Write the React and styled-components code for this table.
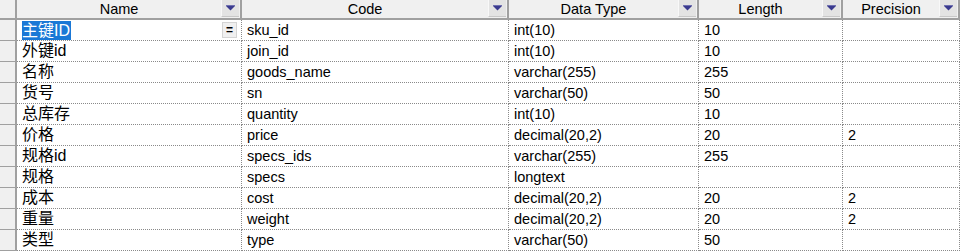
import React from 'react';
import styled, { createGlobalStyle } from 'styled-components';

const GlobalStyle = createGlobalStyle`
  body {
    margin: 0;
    background: #ffffff;
    font-family: "Liberation Sans", "Noto Sans CJK SC", sans-serif;
  }
`;

const COLUMNS = '17px 225px 267px 190px 144px 117px';

const Grid = styled.div`
  display: grid;
  grid-template-columns: ${COLUMNS};
  width: 961px;
  color: #000;
  font-size: 14.5px;
`;

const Corner = styled.div`
  height: 18px;
  background: #f0f0f0;
  border-right: 2px solid #a0a0a0;
  border-bottom: 2px solid #a0a0a0;
  box-sizing: content-box;
`;

const HeaderCell = styled.div`
  display: flex;
  align-items: flex-start;
  height: 18px;
  background: #f0f0f0;
  border-bottom: 2px solid #a0a0a0;
  border-right: 2px solid #a0a0a0;
`;

const HeaderLabel = styled.span`
  flex: 1;
  text-align: center;
  line-height: 18px;
  white-space: nowrap;
`;

const DropButton = styled.span`
  display: flex;
  align-items: center;
  justify-content: center;
  width: 18px;
  height: 17px;
  background: #e3e3e3;
  border-left: 1px solid #f8f8f8;
  border-bottom: 1px solid #c8c8c8;
  box-sizing: border-box;
  margin-right: 1px;
`;

const RowHead = styled.div`
  height: 20px;
  background: #f0f0f0;
  border-right: 2px solid #a0a0a0;
  border-bottom: 1px solid #a0a0a0;
`;

const Cell = styled.div`
  display: flex;
  align-items: center;
  justify-content: space-between;
  height: 20px;
  padding-left: 5px;
  line-height: 20px;
  font-size: ${p => (p.$name ? '16px' : '14.5px')};
  border-right: 1px dotted #8a8a8a;
  border-bottom: 1px dotted #8a8a8a;
  white-space: nowrap;
  overflow: hidden;
`;

const Selected = styled.span`
  background: #1a78d6;
  color: #ffffff;
  line-height: 19px;
  padding-right: 1px;
`;

const EditButton = styled.span`
  display: flex;
  align-items: center;
  justify-content: center;
  width: 15px;
  height: 16px;
  margin-right: 4px;
  background: #f0f0f0;
  border: 1px solid #d4d4d4;
  box-sizing: border-box;
  font-size: 12px;
  font-weight: bold;
  line-height: 1;
`;

const Arrow = () => (
  <svg width="9" height="6" viewBox="0 0 9 6">
    <rect x="0" y="0" width="9" height="1" fill="#7070b0" />
    <path d="M0 1 H9 L4.5 5.5 Z" fill="#3a3a8e" />
  </svg>
);

const headers = ['Name', 'Code', 'Data Type', 'Length', 'Precision'];

const rows = [
  ['主键ID', 'sku_id', 'int(10)', '10', ''],
  ['外键id', 'join_id', 'int(10)', '10', ''],
  ['名称', 'goods_name', 'varchar(255)', '255', ''],
  ['货号', 'sn', 'varchar(50)', '50', ''],
  ['总库存', 'quantity', 'int(10)', '10', ''],
  ['价格', 'price', 'decimal(20,2)', '20', '2'],
  ['规格id', 'specs_ids', 'varchar(255)', '255', ''],
  ['规格', 'specs', 'longtext', '', ''],
  ['成本', 'cost', 'decimal(20,2)', '20', '2'],
  ['重量', 'weight', 'decimal(20,2)', '20', '2'],
  ['类型', 'type', 'varchar(50)', '50', ''],
];

const App = () => (
  <>
    <GlobalStyle />
    <Grid>
      <Corner />
      {headers.map(h => (
        <HeaderCell key={h}>
          <HeaderLabel>{h}</HeaderLabel>
          <DropButton>
            <Arrow />
          </DropButton>
        </HeaderCell>
      ))}
      {rows.map((r, i) => (
        <React.Fragment key={r[1]}>
          <RowHead />
          <Cell $name>
            {i === 0 ? <Selected>{r[0]}</Selected> : <span>{r[0]}</span>}
            {i === 0 && <EditButton>=</EditButton>}
          </Cell>
          <Cell>{r[1]}</Cell>
          <Cell>{r[2]}</Cell>
          <Cell>{r[3]}</Cell>
          <Cell>{r[4]}</Cell>
        </React.Fragment>
      ))}
    </Grid>
  </>
);

export default App;
